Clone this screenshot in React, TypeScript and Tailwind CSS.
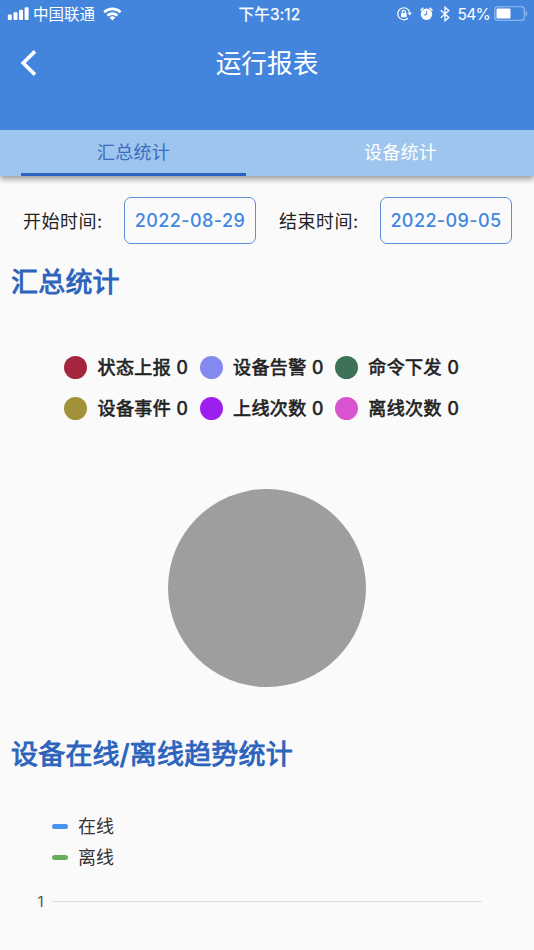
import React from "react";

const LEGEND_ROWS = [
  [
    { label: "状态上报", value: 0, color: "bg-[#a3263d]" },
    { label: "设备告警", value: 0, color: "bg-[#8389ee]" },
    { label: "命令下发", value: 0, color: "bg-[#3d7259]" },
  ],
  [
    { label: "设备事件", value: 0, color: "bg-[#a19139]" },
    { label: "上线次数", value: 0, color: "bg-[#9d1ff0]" },
    { label: "离线次数", value: 0, color: "bg-[#d853d0]" },
  ],
];

function StatusBar() {
  return (
    <div className="grid h-[27px] grid-cols-3 items-center px-[7px] text-[15.5px] leading-[27px]">
      <div className="flex items-center">
        <svg width="22" height="14" viewBox="0 0 22 14" fill="currentColor">
          <rect x="0.8" y="7.6" width="4" height="5.4" rx="1" />
          <rect x="6.5" y="5.3" width="4" height="7.7" rx="1" />
          <rect x="12" y="2.7" width="4" height="10.3" rx="1" />
          <rect x="17.6" y="0.3" width="4" height="12.7" rx="1" />
        </svg>
        <span className="mt-px ml-1">中国联通</span>
        <svg className="ml-2 shrink-0" width="19" height="14" viewBox="0 0 19 14" fill="none" stroke="currentColor" strokeWidth="2.6">
          <path d="M1.2 5.2a11.8 11.8 0 0 1 16.4 0" />
          <path d="M4.4 8.6a7.2 7.2 0 0 1 10 0" />
          <path d="M9.4 13.6 6.5 10.6a4.2 4.2 0 0 1 5.8 0z" fill="currentColor" stroke="none" />
        </svg>
      </div>
      <div className="pl-[5px] text-center tracking-[0.2px] [-webkit-text-stroke:0.25px]">下午3:12</div>
      <div className="flex items-center justify-end">
        <svg className="shrink-0" width="15" height="14" viewBox="0 0 15 14" fill="none" stroke="currentColor" strokeWidth="1.2">
          <path d="M12.7 5.6a6 6 0 1 0-1.8 5.6" />
          <path d="M10.4 5.6h4.6l-2.3 3z" fill="currentColor" stroke="none" />
          <rect x="4" y="6" width="5.6" height="4.2" rx="0.5" fill="currentColor" stroke="none" />
          <path d="M5.2 6.4V5a1.6 1.6 0 0 1 3.2 0v1.4" />
        </svg>
        <svg className="ml-2 shrink-0" width="13" height="14" viewBox="0 0 13 14" fill="none">
          <circle cx="6.5" cy="7.3" r="5.7" fill="currentColor" />
          <path d="M0.5 3.4 3.4 0.8M9.6 0.8l2.9 2.6" stroke="currentColor" strokeWidth="1.4" />
          <path d="M6.7 4.2v3.6H4" stroke="#4385dc" strokeWidth="1" />
        </svg>
        <svg className="ml-[7px] shrink-0" width="10" height="16" viewBox="0 0 10 16" fill="none" stroke="currentColor" strokeWidth="1.3">
          <path d="m.8 4.3 8 7.2L5 14.8V1.2l3.8 3.3-8 7.2" />
        </svg>
        <span className="ml-[7px] tracking-[-0.7px]">54%</span>
        <svg className="-mr-[1px] ml-1 shrink-0" width="34" height="16" viewBox="0 0 34 16">
          <rect x="0.8" y="0.8" width="29.5" height="13.5" rx="2.8" fill="none" stroke="#9bc0ef" strokeWidth="1.1" />
          <rect x="2.5" y="2.5" width="14" height="10" rx="1" fill="white" />
          <path d="M31.6 5.1c2 .6 2 4.4 0 5z" fill="#9bc0ef" />
        </svg>
      </div>
    </div>
  );
}

function DateField({ label, value }: { label: string; value: string }) {
  return (
    <div className="flex items-center justify-between">
      <span className="mt-px text-[18px] tracking-[0.5px] text-[#222]">{label}</span>
      <button className="h-[47px] w-[132px] rounded-[7px] border border-[#5b8dd8] text-[18px] font-medium tracking-[0.4px] whitespace-nowrap text-[#4187e0]">
        {value}
      </button>
    </div>
  );
}

function SectionTitle({ children }: { children: React.ReactNode }) {
  return (
    <h2 className="ml-[11px] text-[27px] leading-10 tracking-[0.2px] text-[#2c63bc] [-webkit-text-stroke:0.9px]">
      {children}
    </h2>
  );
}

export default function App() {
  return (
    <div className="flex h-[950px] w-[534px] flex-col overflow-hidden bg-[#fafafa] font-[Inter,'Noto_Sans_CJK_SC',sans-serif]">
      <header className="relative z-10 h-[130px] shrink-0 bg-[#4385dc] text-white">
        <StatusBar />
        <div className="grid h-[72px] grid-cols-3 items-center">
          <svg className="-mt-px ml-5" width="18" height="28" viewBox="0 0 18 28" fill="none" stroke="currentColor" strokeWidth="3.6">
            <path d="M15 2.4 3.2 14 15 25.6" />
          </svg>
          <h1 className="mt-px text-center text-[25.7px] leading-9">运行报表</h1>
        </div>
      </header>
      <nav className="grid h-[46px] shrink-0 grid-cols-2 bg-[#9dc5ed] text-center text-[18px] leading-[45px] tracking-[0.3px] shadow-[0_3px_6px_rgba(0,0,0,0.4)]">
        <div className="mr-[21px] ml-[21px] h-[46px] border-b-[3px] border-[#2a62bd] text-[#3a6cc2]">汇总统计</div>
        <div className="text-white">设备统计</div>
      </nav>
      <main>
        <div className="mt-[21px] grid grid-cols-[233px_233px] gap-x-[23px] pl-[23px]">
          <DateField label="开始时间:" value="2022-08-29" />
          <DateField label="结束时间:" value="2022-09-05" />
        </div>
        <div className="pt-[19px]">
          <SectionTitle>汇总统计</SectionTitle>
        </div>
        <div className="mt-[46px] ml-[64px] flex flex-col gap-[5px]">
          {LEGEND_ROWS.map((row, i) => (
            <div key={i} className="grid h-9 grid-cols-[135.5px_135.3px_135.3px] items-center">
              {row.map((item) => (
                <div key={item.label} className="flex items-center whitespace-nowrap">
                  <span className={`size-[23px] rounded-full ${item.color}`} />
                  <span className="mt-px ml-[10.5px] text-[18px] tracking-[0.4px] text-[#222] [-webkit-text-stroke:0.65px]">
                    {item.label} {item.value}
                  </span>
                </div>
              ))}
            </div>
          ))}
        </div>
        <div className="mx-auto mt-[63px] size-[198px] rounded-full bg-[#9e9e9e]" />
        <div className="pt-[48px]">
          <SectionTitle>设备在线/离线趋势统计</SectionTitle>
        </div>
        <div className="mt-[36px] ml-[52px] text-[18px] leading-[31px] text-[#333]">
          <div className="flex items-center gap-[10px]">
            <span className="h-[5px] w-4 rounded-full bg-[#4593ed]" />
            <span>在线</span>
          </div>
          <div className="flex items-center gap-[10px]">
            <span className="h-[5px] w-4 rounded-full bg-[#67ad5b]" />
            <span>离线</span>
          </div>
        </div>
        <div className="mt-[16px] flex items-center text-[15px] leading-6 text-[#555]">
          <span className="mt-px w-[52px] pl-[37.5px]">1</span>
          <span className="h-px w-[430px] bg-[#dedede]" />
        </div>
      </main>
    </div>
  );
}
